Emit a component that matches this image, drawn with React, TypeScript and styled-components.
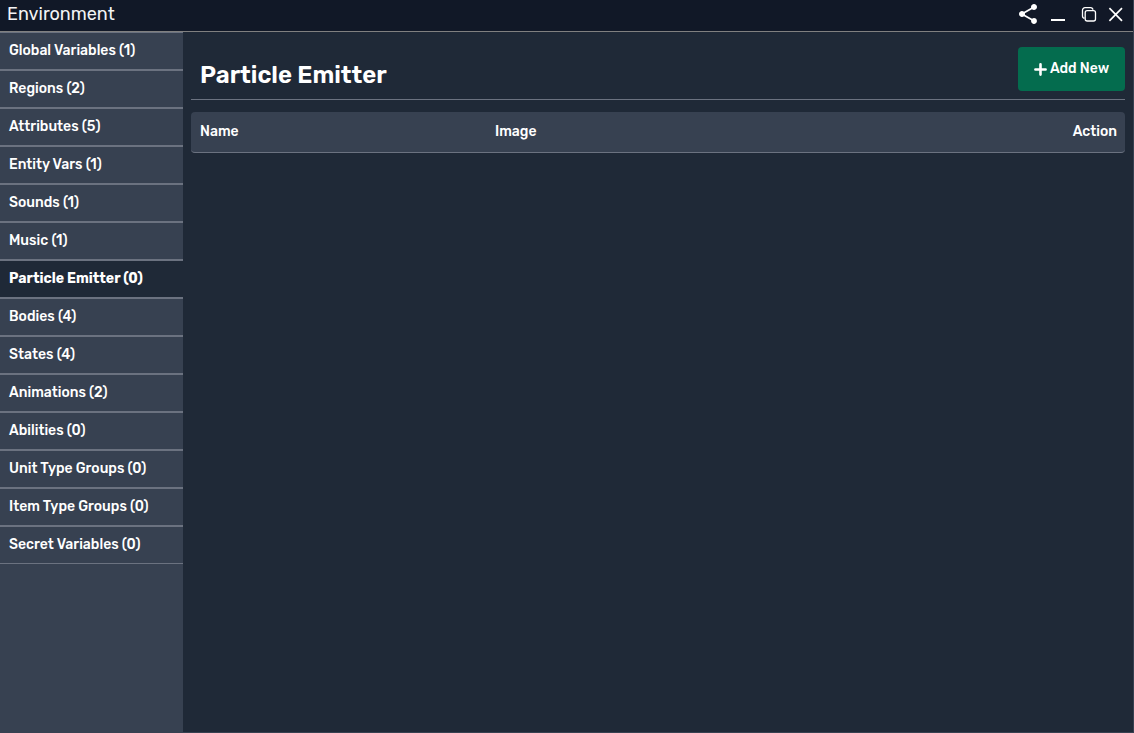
import React from "react";
import styled, { createGlobalStyle } from "styled-components";
import { MdShare } from "react-icons/md";

const GlobalStyle = createGlobalStyle`
  * { box-sizing: border-box; }
  body {
    margin: 0;
    background: #1f2937;
    color: #ffffff;
    font-family: Rubik, Roboto, "Liberation Sans", sans-serif;
    font-size: 14px;
    line-height: 20px;
  }
`;

const Window = styled.div`
  display: flex;
  flex-direction: column;
  min-height: 100vh;
  border-right: 1px solid #374151;
  border-bottom: 1px solid #374151;
`;

const TitleBar = styled.header`
  display: flex;
  align-items: center;
  justify-content: space-between;
  height: 32px;
  padding: 0 7px 3px;
  background: #111827;
  border-bottom: 1px solid #808080;
`;

const WindowTitle = styled.span`
  font-size: 18px;
  line-height: 28px;
  color: #f3f4f6;
`;

const WindowControls = styled.div`
  display: flex;
  align-items: center;
  gap: 6px;
`;

const IconButton = styled.button`
  display: flex;
  padding: 0;
  border: 0;
  background: none;
  color: #ffffff;
  cursor: pointer;
`;

const Body = styled.div`
  display: flex;
  flex: 1;
`;

const Sidebar = styled.nav`
  flex: 0 0 183px;
  background: #374151;
`;

const NavItem = styled.button<{ $active: boolean }>`
  display: block;
  width: 100%;
  height: 38px;
  padding: 0 9px;
  border: solid #6b7280;
  border-width: 1px 0;
  background: ${(p) => (p.$active ? "#1f2937" : "transparent")};
  color: #ffffff;
  font: inherit;
  font-weight: ${(p) => (p.$active ? 700 : 500)};
  text-align: left;
  white-space: nowrap;
  cursor: pointer;
`;

const Content = styled.main`
  flex: 1;
  min-width: 0;
  padding: 15px 8px 8px;
`;

const ContentHeader = styled.div`
  display: flex;
  align-items: flex-start;
  justify-content: space-between;
  padding-bottom: 8px;
  border-bottom: 1px solid #6b7280;
`;

const Heading = styled.h1`
  margin: 0;
  padding: 12px 0 0 9px;
  font-size: 24px;
  line-height: 32px;
  font-weight: 600;
`;

const AddButton = styled.button`
  display: flex;
  align-items: center;
  justify-content: center;
  gap: 3px;
  width: 107px;
  height: 44px;
  padding: 0;
  border: 0;
  border-radius: 4px;
  background: #046c4e;
  color: #ffffff;
  font: inherit;
  font-weight: 500;
  cursor: pointer;
`;

const Table = styled.table`
  width: 100%;
  margin-top: 12px;
  border-spacing: 0;
  table-layout: fixed;
`;

const HeadCell = styled.th<{ $align?: "right"; $width?: string }>`
  width: ${(p) => p.$width ?? "auto"};
  height: 41px;
  padding: 0 8px;
  background: #374151;
  border-bottom: 1px solid #6b7280;
  font-weight: 500;
  text-align: ${(p) => p.$align ?? "left"};

  &:first-child { padding-left: 9px; border-radius: 4px 0 0 4px; }
  &:last-child { border-radius: 0 4px 4px 0; }
`;

const SECTIONS: [string, number][] = [
  ["Global Variables", 1],
  ["Regions", 2],
  ["Attributes", 5],
  ["Entity Vars", 1],
  ["Sounds", 1],
  ["Music", 1],
  ["Particle Emitter", 0],
  ["Bodies", 4],
  ["States", 4],
  ["Animations", 2],
  ["Abilities", 0],
  ["Unit Type Groups", 0],
  ["Item Type Groups", 0],
  ["Secret Variables", 0],
];

export default function App() {
  const [active, setActive] = React.useState("Particle Emitter");
  return (
    <Window>
      <GlobalStyle />
      <TitleBar>
        <WindowTitle>Environment</WindowTitle>
        <WindowControls>
          <IconButton aria-label="Share">
            <MdShare size={24} />
          </IconButton>
          <IconButton aria-label="Minimize">
            <svg width="24" height="24" viewBox="0 0 24 24" fill="currentColor">
              <path d="M5 17h14v2H5z" />
            </svg>
          </IconButton>
          <IconButton aria-label="Restore">
            <svg width="24" height="24" viewBox="0 0 24 24" fill="none" stroke="currentColor" strokeWidth="1.3">
              <rect x="9.2" y="8.7" width="10.3" height="10.3" rx="2" />
              <path d="M8.6 16.2a2.3 2.3 0 0 1-2.1-2.3V8.2a2.5 2.5 0 0 1 2.5-2.5h5.6a2.3 2.3 0 0 1 2.3 2.1" />
            </svg>
          </IconButton>
          <IconButton aria-label="Close">
            <svg width="20" height="24" viewBox="0 0 20 24" fill="none" stroke="currentColor" strokeWidth="1.7">
              <path d="M3.4 6.2l12.6 12.6M16 6.2L3.4 18.8" />
            </svg>
          </IconButton>
        </WindowControls>
      </TitleBar>
      <Body>
        <Sidebar aria-label="Sections">
          {SECTIONS.map(([name, count]) => (
            <NavItem key={name} $active={name === active} onClick={() => setActive(name)}>
              {name} ({count})
            </NavItem>
          ))}
        </Sidebar>
        <Content>
          <ContentHeader>
            <Heading>{active}</Heading>
            <AddButton>
              <svg width="13" height="13" viewBox="0 0 13 13" fill="none" stroke="currentColor" strokeWidth="2.6" strokeLinecap="round">
                <path d="M6.5 1.4v10.2M1.4 6.5h10.2" />
              </svg>
              Add New
            </AddButton>
          </ContentHeader>
          <Table>
            <thead>
              <tr>
                <HeadCell scope="col" $width="296px">Name</HeadCell>
                <HeadCell scope="col">Image</HeadCell>
                <HeadCell scope="col" $align="right">Action</HeadCell>
              </tr>
            </thead>
          </Table>
        </Content>
      </Body>
    </Window>
  );
}
